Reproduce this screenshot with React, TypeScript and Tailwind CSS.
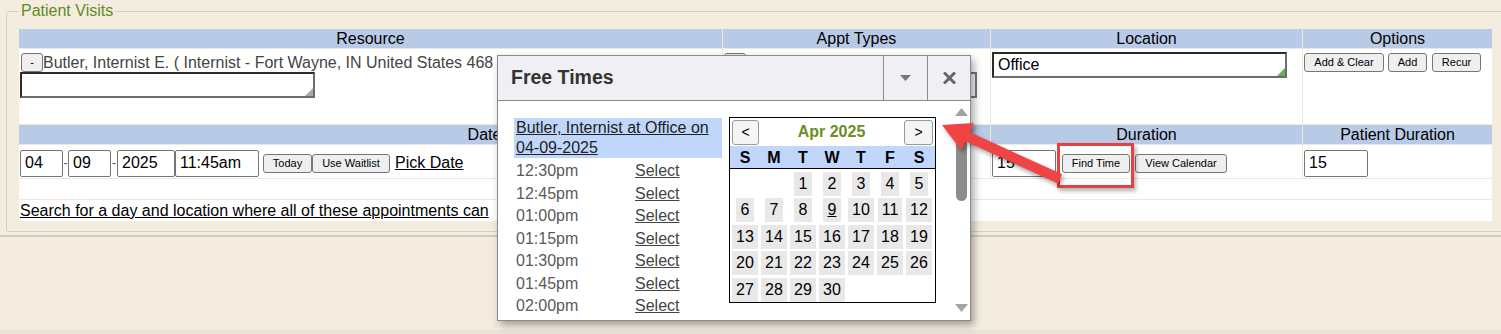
import React from 'react';

const times = ['12:30pm', '12:45pm', '01:00pm', '01:15pm', '01:30pm', '01:45pm', '02:00pm'];
const weekDays = ['S', 'M', 'T', 'W', 'T', 'F', 'S'];
// April 2025 starts on a Tuesday
const days: (number | null)[] = [null, null, ...Array.from({ length: 30 }, (_, i) => i + 1)];

const Btn: React.FC<{ children: React.ReactNode; w: string }> = ({ children, w }) => (
  <div
    className={`${w} h-[19px] flex items-center justify-center text-[11px] leading-none text-black bg-[#efefef] border border-[#767676] rounded-[3px] shrink-0`}
  >
    {children}
  </div>
);

const Field: React.FC<{ children?: React.ReactNode; w: string }> = ({ children, w }) => (
  <div
    className={`${w} h-[27px] flex items-center px-[4px] text-[16px] text-black bg-white border border-[#767676] rounded-[2px] shrink-0`}
  >
    {children}
  </div>
);

const Header: React.FC<{ children?: React.ReactNode; className?: string }> = ({ children, className = '' }) => (
  <div className={`bg-[#b9cae6] text-center text-[16px] leading-[19px] text-black ${className}`}>{children}</div>
);

const Grip: React.FC<{ color: string }> = ({ color }) => (
  <svg className="absolute right-0 bottom-0" width="8" height="8" viewBox="0 0 8 8">
    <polygon points="8,0 8,8 0,8" fill={color} />
  </svg>
);

const App: React.FC = () => {
  return (
    <div className="relative w-[1501px] h-[334px] overflow-hidden bg-[#f4eddf] font-['Liberation_Sans',Arial,sans-serif] flex flex-col">
      <div className="border-b-2 border-[#cfccc6] pb-[3px]">
        <fieldset className="ml-[6px] w-[1510px] border border-[#d3d0ca] rounded-[3px] pl-[12px] pb-[10px]">
          <legend className="px-[2px] text-[16px] leading-[22px] text-[#5d8c1f]">Patient Visits</legend>

          {/* Visits table */}
          <div className="mt-[7px] w-[1473px] grid grid-cols-[703px_267px_311px_189px] gap-px bg-[#efe7d8]">
            <Header>Resource</Header>
            <Header>Appt Types</Header>
            <Header>Location</Header>
            <Header>Options</Header>

            <div className="h-[75px] bg-white pt-[4px] pl-[1px]">
              <div className="flex items-center h-[19px]">
                <Btn w="w-[22px] ml-[1px]">-</Btn>
                <span className="text-[16px] text-[#444] whitespace-nowrap">
                  Butler, Internist E. ( Internist - Fort Wayne, IN United States 468
                </span>
              </div>
              <div className="relative w-[295px] h-[26px] bg-white border-2 border-t-[#2b2b2b] border-l-[#2b2b2b] border-b-[#6e6e6e] border-r-[#6e6e6e]">
                <Grip color="#aaa" />
              </div>
            </div>
            <div className="h-[75px] bg-white pt-[4px] pl-[1px]">
              <Btn w="w-[22px]">+</Btn>
              <div className="ml-[21px] w-[232px] h-[26px] bg-[#f5f5f5] border-2 border-[#777]" />
            </div>
            <div className="h-[75px] bg-white pt-[3px] pl-[1px]">
              <div className="relative w-[295px] h-[26px] flex items-center pl-[4px] text-[16px] text-black bg-white border-2 border-t-[#2b2b2b] border-l-[#2b2b2b] border-b-[#6e6e6e] border-r-[#6e6e6e]">
                Office
                <Grip color="#5fb74a" />
              </div>
            </div>
            <div className="h-[75px] bg-white pt-[4px] pl-[1px] flex items-start gap-[4px]">
              <Btn w="w-[80px]">Add &amp; Clear</Btn>
              <Btn w="w-[39px]">Add</Btn>
              <Btn w="w-[49px] ml-[1px]">Recur</Btn>
            </div>

            <Header className="col-span-2 pr-[40px]">Date</Header>
            <Header>Duration</Header>
            <Header>Patient Duration</Header>

            <div className="col-span-2 h-[33px] bg-white pt-[3px] pl-[1px] flex items-center self-start text-[16px]">
              <Field w="w-[43px]">04</Field>
              <span className="w-[5px] text-[12px] text-[#555] text-center">-</span>
              <Field w="w-[43px]">09</Field>
              <span className="w-[6px] text-[12px] text-[#555] text-center">-</span>
              <Field w="w-[58px]">2025</Field>
              <Field w="w-[84px]">11:45am</Field>
              <div className="ml-[4px] flex">
                <Btn w="w-[49px]">Today</Btn>
                <Btn w="w-[78px]">Use Waitlist</Btn>
              </div>
              <span className="ml-[5px] underline text-black">Pick Date</span>
            </div>
            <div className="h-[33px] bg-white pt-[3px] pl-[1px] flex items-center">
              <Field w="w-[64px]">15</Field>
              <div className="ml-[6px] flex gap-[5px]">
                <Btn w="w-[68px]">Find Time</Btn>
                <Btn w="w-[92px]">View Calendar</Btn>
              </div>
            </div>
            <div className="h-[33px] bg-white pt-[3px] pl-[1px] flex items-center">
              <Field w="w-[64px]">15</Field>
            </div>

            <div className="col-span-4 h-[20px] bg-white" />
            <div className="col-span-4 h-[21px] bg-white pl-[1px] flex items-center text-[16px] text-black">
              <span className="underline whitespace-nowrap">
                Search for a day and location where all of these appointments can
              </span>
            </div>
          </div>
        </fieldset>
      </div>
      <div className="mt-auto h-[4px] bg-[#e8e3d6]" />

      {/* Free Times popup */}
      <div className="absolute left-[497px] top-[55px] w-[474px] h-[266px] bg-white border border-[#8a8a8a] shadow-[3px_4px_8px_rgba(0,0,0,0.35)] flex flex-col">
        <div className="h-[45px] bg-[#efeff4] border-b border-[#8a8a8a] flex items-stretch shrink-0">
          <div className="flex-1 flex items-center pl-[13px] text-[19.5px] font-bold text-[#333]">Free Times</div>
          <div className="w-[44px] border-l border-[#8a8a8a] flex items-center justify-center">
            <svg width="11" height="6" viewBox="0 0 11 6">
              <polygon points="0,0 11,0 5.5,6" fill="#777" />
            </svg>
          </div>
          <div className="w-[43px] border-l border-[#8a8a8a] flex items-center justify-center">
            <svg width="13" height="12" viewBox="0 0 13 12">
              <path d="M2 1.5 L11 10.5 M11 1.5 L2 10.5" stroke="#666" strokeWidth="3" strokeLinecap="square" />
            </svg>
          </div>
        </div>

        <div className="relative flex-1 flex">
          <div className="w-[231px] pl-[16px] pt-[17px] shrink-0">
            <div className="w-[208px] bg-[#c0d6fa] pl-[2px] text-[16px] leading-[20px] text-[#222] underline">
              Butler, Internist at Office on 04-09-2025
            </div>
            <div className="pt-[2px]">
              {times.map((t) => (
                <div key={t} className="flex h-[22.5px] items-center text-[16px]">
                  <span className="w-[121px] pl-[2px] text-[#5a5a5a]">{t}</span>
                  <span className="underline text-[#444]">Select</span>
                </div>
              ))}
            </div>
          </div>

          {/* Month calendar */}
          <div className="mt-[16px] w-[207px] h-[186px] border border-black bg-white shrink-0">
            <div className="h-[28px] flex items-center px-[2px]">
              <div className="w-[27px] h-[25px] flex items-center justify-center text-[14px] bg-[#f5f5f5] border border-[#999] rounded-[3px]">&lt;</div>
              <div className="flex-1 text-center text-[16px] font-bold text-[#6b8e23]">Apr 2025</div>
              <div className="w-[29px] h-[25px] flex items-center justify-center text-[14px] bg-[#f5f5f5] border border-[#999] rounded-[3px]">&gt;</div>
            </div>
            <div className="h-[23px] bg-[#c0d6fa] border-b border-black grid grid-cols-[repeat(7,26px)] gap-x-[3px] pl-[2px] items-center">
              {weekDays.map((d, i) => (
                <div key={i} className="text-center text-[16px] font-bold text-black">{d}</div>
              ))}
            </div>
            <div className="pt-[2.5px] grid grid-cols-[repeat(7,26px)] gap-x-[3px] gap-y-[2.5px] pl-[2px]">
              {days.map((d, i) => (
                <div key={i} className="h-[24px] flex justify-center">
                  {d !== null && (
                    <span
                      className={`h-[24px] min-w-[18px] px-[4px] flex items-center justify-center bg-[#e8e8e8] text-[16px] text-black ${d === 9 ? 'underline' : ''}`}
                    >
                      {d}
                    </span>
                  )}
                </div>
              ))}
            </div>
          </div>

          {/* scrollbar */}
          <div className="ml-auto w-[17px] flex flex-col items-center pt-[7px] pb-[8px]">
            <svg width="13" height="8" viewBox="0 0 13 8">
              <polygon points="6.5,0 13,8 0,8" fill="#a3a3a3" />
            </svg>
            <div className="mt-[23px] w-[11px] h-[62px] rounded-[6px] bg-[#8c8c8c]" />
            <svg className="mt-auto" width="13" height="8" viewBox="0 0 13 8">
              <polygon points="0,0 13,0 6.5,8" fill="#a3a3a3" />
            </svg>
          </div>
        </div>
      </div>

      {/* annotation box round Find Time */}
      <div className="absolute left-[1057px] top-[143px] w-[77px] h-[45px] border-[3px] border-[#e8403f] shadow-[2px_3px_4px_rgba(0,0,0,0.3)]" />

      {/* annotation arrow */}
      <svg
        className="absolute left-[930px] top-[100px] drop-shadow-[2px_3px_2px_rgba(0,0,0,0.35)]"
        width="150"
        height="100"
        viewBox="0 0 150 100"
      >
        <polygon
          points="12,25 43.7,23 39.6,32.1 132.1,74.3 127.9,83.4 35.4,41.2 31.3,50.3"
          fill="#f04444"
        />
      </svg>
    </div>
  );
};

export default App;
